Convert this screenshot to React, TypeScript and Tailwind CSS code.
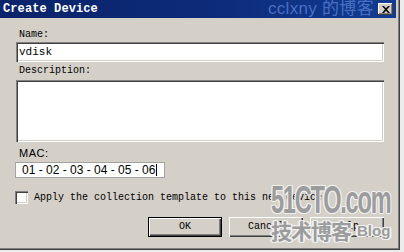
const mono = "font-['Liberation_Mono','DejaVu_Sans_Mono',monospace]";

const sunken =
  "shadow-[inset_1px_1px_#808080,inset_2px_2px_#404040,inset_-1px_-1px_#ffffff,inset_-2px_-2px_#d4d0c8]";
const raised =
  "shadow-[inset_1px_1px_#ffffff,inset_-1px_-1px_#404040,inset_-2px_-2px_#808080]";

const App = () => {
  return (
    <div className="w-[404px] h-[252px] bg-[#ececec] overflow-hidden">
      <div className="relative w-[400px] h-[250px] bg-[#d4d0c8] pr-[4px] shadow-[inset_-1px_-1px_#404040,inset_-2px_-2px_#808080,inset_-3px_-3px_#d4d0c8]">
        {/* title bar */}
        <div className="relative h-[18px] flex items-center justify-between bg-gradient-to-r from-[#0a246a] via-[#0c2a78] to-[#123c92]">
          <span className={`${mono} pl-[3px] text-[12px] font-bold text-white tracking-[0.1px]`}>
            Create Device
          </span>
          <span className="absolute left-[268px] top-[-1px] text-[17px] leading-[19px] text-[#4870c4] tracking-[0.3px] font-['Liberation_Sans','Noto_Sans_CJK_SC',sans-serif]">
            cclxny 的博客
          </span>
          <button
            type="button"
            className="relative mr-[3px] w-[15px] h-[12px] bg-[#d4d0c8] flex items-center justify-center shadow-[inset_-1px_-1px_#404040,inset_1px_1px_#ffffff,inset_-2px_-2px_#808080]"
          >
            <svg width="8" height="7" viewBox="0 0 8 7">
              <path d="M0 0h2l2 2.2L6 0h2L5 3.5 8 7H6L4 4.8 2 7H0l3-3.5z" fill="#000" />
            </svg>
          </button>
        </div>

        {/* body */}
        <div className={`${mono} flex flex-col pl-[16px] pr-[12px] text-[10px] leading-[12px] text-black`}>
          <label className="mt-[11px] pl-[3px]">Name:</label>
          <div className={`h-[20px] mt-[1px] bg-white flex items-center pl-[3px] text-[11px] ${sunken}`}>
            vdisk
          </div>
          <label className="mt-[3px] pl-[3px]">Description:</label>
          <div className={`h-[62px] mt-[3px] bg-white ${sunken}`} />
          <label className="mt-[5px] pl-[3px] font-['Liberation_Sans',sans-serif] text-[11px] tracking-[0.5px]">
            MAC:
          </label>
          <div className="w-[150px] h-[16px] mt-[3px] -ml-[1px] bg-white border border-[#a4a4a4] flex items-center pl-[6px] text-[12px] font-['Liberation_Sans',sans-serif]">
            <span>01 - 02 - 03 - 04 - 05 - 06</span>
            <span className="ml-[1px] w-px h-[12px] bg-black" />
          </div>
          <div className="mt-[13px] flex items-center -ml-[1px]">
            <span className={`w-[13px] h-[13px] bg-white ${sunken}`} />
            <span className="ml-[6px]">Apply the collection template to this new device</span>
          </div>
          <div className="mt-[13px] flex justify-end gap-[7px]">
            <button
              type="button"
              className="w-[74px] h-[20px] bg-[#d4d0c8] text-[10px] shadow-[inset_0_0_0_1px_#000,inset_2px_2px_#ffffff,inset_-2px_-2px_#404040,inset_-3px_-3px_#808080]"
            >
              OK
            </button>
            <button type="button" className={`w-[74px] h-[20px] bg-[#d4d0c8] text-[10px] ${raised}`}>
              Cancel
            </button>
            <button type="button" className={`w-[74px] h-[20px] bg-[#d4d0c8] text-[10px] ${raised}`}>
              Help
            </button>
          </div>
        </div>

        {/* watermark */}
        <div className="absolute left-[271px] top-[181px] w-[122px] flex flex-col text-[#9c9c9c] [text-shadow:1px_1px_0_#f0f0f0,-1px_-1px_0_#f0f0f0,1px_-1px_0_#f0f0f0,-1px_1px_0_#f0f0f0,2px_0_0_#f0f0f0,-2px_0_0_#f0f0f0]">
          <span className="block text-[38px] leading-[38px] font-bold tracking-[-2px] scale-x-[0.62] origin-left whitespace-nowrap font-['Liberation_Sans',sans-serif]">
            51CTO.com
          </span>
          <div className="flex items-end -mt-[3px]">
            <span className="text-[21px] leading-[28px] font-bold tracking-[-1px] font-['Noto_Sans_CJK_SC',sans-serif]">
              技术博客
            </span>
            <span className="ml-[6px] mb-[5px] text-[15px] leading-[17px] font-bold font-['Liberation_Sans',sans-serif]">
              Blog
            </span>
          </div>
        </div>
      </div>
    </div>
  );
};

export default App;
